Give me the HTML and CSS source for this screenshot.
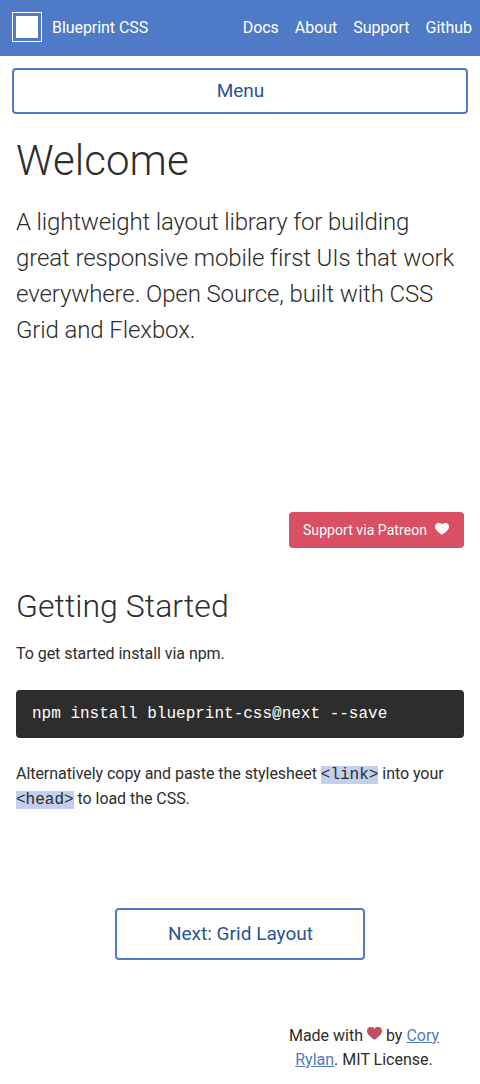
FILE: index.html
```html
<!DOCTYPE html>
<html lang="en">
<head>
<meta charset="utf-8">
<title>Blueprint CSS</title>
<link rel="stylesheet" href="styles.css">
</head>
<body>
<header class="header">
  <a class="brand"><span class="logo"></span><span class="brand-name">Blueprint CSS</span></a>
  <nav class="nav"><a>Docs</a><a>About</a><a>Support</a><a>Github</a></nav>
</header>
<div class="menu-row"><button class="menu">Menu</button></div>
<main class="main">
  <h1 class="title">Welcome</h1>
  <p class="lead">A lightweight layout library for building great responsive mobile first UIs that work everywhere. Open Source, built with CSS Grid and Flexbox.</p>
  <div class="support"><a class="patreon">Support via Patreon <svg class="heart" viewBox="0 0 14 12" preserveAspectRatio="none"><path d="M7 12C5.500 10.300 0 7.500 0 3.700C0 -.3 5 -1.500 7 1.600C9 -1.500 14 -.3 14 3.700C14 7.500 8.500 10.300 7 12Z"/></svg></a></div>
  <h2 class="subtitle">Getting Started</h2>
  <p class="text">To get started install via npm.</p>
  <pre class="block">npm install blueprint-css@next --save</pre>
  <p class="text">Alternatively copy and paste the stylesheet <code class="code">&lt;link&gt;</code> into your <code class="code">&lt;head&gt;</code> to load the CSS.</p>
  <div class="next-row"><a class="next">Next: Grid Layout</a></div>
</main>
<footer class="footer"><p class="credit">Made with <svg class="heart heart-red" viewBox="0 0 14 12" preserveAspectRatio="none"><path d="M7 12C5.500 10.300 0 7.500 0 3.700C0 -.3 5 -1.500 7 1.600C9 -1.500 14 -.3 14 3.700C14 7.500 8.500 10.300 7 12Z"/></svg> by <a class="link">Cory Rylan</a>. MIT License.</p></footer>
</body>
</html>
```
FILE: styles.css
```css
* { box-sizing: border-box; }
body { margin: 0; background: #fff; color: #2d2d2d; font: 400 16px/24px Roboto, sans-serif; }
.header { height: 56px; padding: 0 8px 0 12px; background: #4f7ac7; color: #fff; display: flex; align-items: center; justify-content: space-between; }
.brand { display: flex; align-items: center; gap: 10px; height: 54px; margin-bottom: 2px; }
.brand-name { padding-top: 2px; letter-spacing: -0.06px; }
.logo { width: 30px; height: 30px; border: 1px solid #fff; padding: 3px; background: #fff content-box; }
.nav { display: flex; gap: 16px; letter-spacing: -0.03px; }
.menu-row { padding: 12px 12px 0; }
.menu { display: block; width: 100%; height: 46px; padding: 0 0 2px 1px; border: 2px solid #4f7ac7; border-radius: 4px; background: #fff; color: #2a5298; font: 400 19px Roboto, sans-serif; }
.main { padding: 17px 16px 0; }
.title { margin: 0; font-size: 42px; line-height: 60px; font-weight: 300; letter-spacing: 0.05px; }
.lead { margin: 13px 0 0; font-size: 24px; line-height: 36px; font-weight: 300; letter-spacing: -0.11px; }
.lead::first-line { letter-spacing: -0.15px; }
.support { display: flex; justify-content: flex-end; margin-top: 164px; }
.patreon { display: flex; align-items: center; gap: 8px; width: 175px; height: 36px; padding: 0 14px; border-radius: 4px; background: #d94f64; color: #fff; font-size: 14px; letter-spacing: 0.06px; white-space: nowrap; }
.heart { width: 14px; height: 12px; margin-bottom: 2px; fill: currentColor; }
.subtitle { margin: 34px 0 0; font-size: 32px; line-height: 48px; font-weight: 300; letter-spacing: 0.05px; }
.text { margin: 11px 0 0; line-height: 25px; letter-spacing: -0.05px; }
.block { margin: 24px 0 23px; height: 48px; padding: 12px 16px; border-radius: 4px; background: #2d2d2d; color: #fff; font: 16px/24px "Liberation Mono", monospace; }
.code { background: #c1d0ec; font: 16px "Liberation Mono", monospace; letter-spacing: 0; }
.next-row { display: flex; justify-content: center; margin-top: 97px; }
.next { width: 250px; height: 52px; padding-left: 1px; border: 2px solid #4f7ac7; border-radius: 4px; color: #2a5298; font-size: 19px; line-height: 47px; text-align: center; letter-spacing: 0.02px; }
.footer { padding: 64px 16px 11px; display: flex; justify-content: flex-end; }
.credit { width: 200px; margin: 0; padding: 0 16px; text-align: center; }
.heart-red { width: 15px; height: 13px; margin-bottom: 1px; color: #c05060; }
.link { color: #4f7ac7; text-decoration: underline; }
```
